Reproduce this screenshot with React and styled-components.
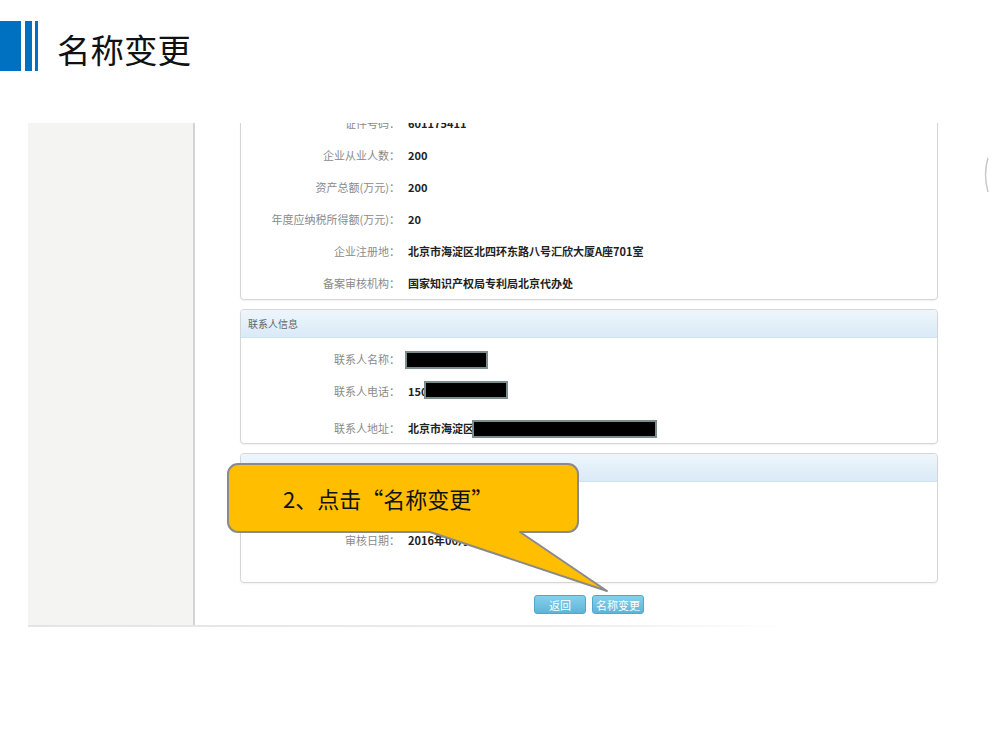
import styled, { createGlobalStyle } from "styled-components";

const GlobalStyle = createGlobalStyle`
  html, body {
    margin: 0;
    padding: 0;
    background: #ffffff;
  }
  body {
    font-family: "Noto Sans CJK SC", "Noto Sans", sans-serif;
  }
`;

const Page = styled.div`
  position: relative;
  width: 1000px;
  height: 750px;
  overflow: hidden;
  background: #ffffff;
`;

const Header = styled.div`
  display: flex;
  align-items: center;
  height: 50px;
  padding-top: 21px;
`;

const Bar = styled.div`
  width: ${(p) => p.$w}px;
  height: 50px;
  margin-right: ${(p) => p.$gap}px;
  background: #0070c0;
`;

const Title = styled.h1`
  margin: 5px 0 0 19px;
  font-size: 33.5px;
  font-weight: 400;
  line-height: 1;
  color: #111;
`;

const Shot = styled.div`
  display: flex;
  height: 502px;
  margin: 52px 0 0 28px;
  overflow: hidden;
`;

const Sidebar = styled.div`
  width: 165px;
  flex-shrink: 0;
  background: #f4f4f2;
  border-right: 2px solid #d4d4d4;
`;

const Main = styled.div`
  display: flex;
  flex-direction: column;
  gap: 9px;
  padding-left: 45px;
  width: 698px;
`;

const Panel = styled.div`
  border: 1px solid #d6d6d6;
  border-radius: 4px;
  background: #fff;
  box-shadow: 0 1px 2px rgba(0, 0, 0, 0.06);
  margin-top: ${(p) => p.$offset || 0}px;
  padding-bottom: ${(p) => p.$bottom || 0}px;
`;

const PanelHead = styled.div`
  height: 27px;
  display: flex;
  align-items: center;
  padding-left: 7px;
  font-size: 10px;
  color: #666;
  background: linear-gradient(#eef6fc, #d9eaf7);
  border-bottom: 1px solid #cfe2f1;
  border-radius: 4px 4px 0 0;
`;

const PanelBody = styled.div`
  padding-top: ${(p) => p.$top || 0}px;
`;

const Row = styled.div`
  display: flex;
  align-items: center;
  height: ${(p) => p.$h || 32}px;
  margin-top: ${(p) => p.$mt || 0}px;
`;

const Label = styled.div`
  width: 159px;
  text-align: right;
  font-size: 11px;
  color: #8a8a8a;
  white-space: nowrap;
`;

const Value = styled.div`
  display: flex;
  align-items: center;
  margin-left: 8px;
  font-size: 11px;
  font-weight: 700;
  color: #222;
  white-space: nowrap;
`;

const Redact = styled.span`
  display: inline-block;
  width: ${(p) => p.$w}px;
  height: 14px;
  margin-left: ${(p) => p.$ml || 0}px;
  margin-top: ${(p) => p.$mt || 0}px;
  background: #000;
  border: 2px solid #7d8c8c;
`;

const Actions = styled.div`
  display: flex;
  justify-content: center;
  gap: 6px;
  margin-top: 3px;
`;

const Btn = styled.div`
  width: 50px;
  height: 17px;
  display: flex;
  align-items: center;
  justify-content: center;
  font-size: 11px;
  color: #fff;
  background: linear-gradient(#86d0ea, #5db5d9);
  border: 1px solid #4fa7cd;
  border-radius: 3px;
`;

const ShotEdge = styled.div`
  height: 2px;
  margin-left: 28px;
  width: 760px;
  background: linear-gradient(to right, #e4e4e4, #ececec 70%, rgba(236, 236, 236, 0));
`;

const Callout = styled.svg`
  position: absolute;
  left: 226px;
  top: 462px;
`;

const CalloutText = styled.div`
  position: absolute;
  left: 228px;
  top: 464px;
  width: 350px;
  height: 68px;
  display: flex;
  align-items: center;
  padding-left: 55px;
  box-sizing: border-box;
  font-size: 22px;
  color: #111;
  white-space: nowrap;
`;

const EdgeMark = styled.svg`
  position: absolute;
  left: 980px;
  top: 156px;
`;

const companyRows = [
  ["证件号码：", "601175411"],
  ["企业从业人数：", "200"],
  ["资产总额(万元)：", "200"],
  ["年度应纳税所得额(万元)：", "20"],
  ["企业注册地：", "北京市海淀区北四环东路八号汇欣大厦A座701室"],
  ["备案审核机构：", "国家知识产权局专利局北京代办处"],
];

export default function App() {
  return (
    <Page>
      <GlobalStyle />
      <Header>
        <Bar $w={21} $gap={4} />
        <Bar $w={7} $gap={3} />
        <Bar $w={3} $gap={0} />
        <Title>名称变更</Title>
      </Header>

      <Shot>
        <Sidebar />
        <Main>
          <Panel $offset={-17}>
            {companyRows.map(([l, v]) => (
              <Row key={l}>
                <Label>{l}</Label>
                <Value>{v}</Value>
              </Row>
            ))}
          </Panel>

          <Panel>
            <PanelHead>联系人信息</PanelHead>
            <PanelBody $top={5}>
              <Row>
                <Label>联系人名称：</Label>
                <Value>
                  <Redact $w={79} $ml={-3} $mt={2} />
                </Value>
              </Row>
              <Row>
                <Label>联系人电话：</Label>
                <Value>
                  150
                  <Redact $w={80} $ml={-3} $mt={-2} />
                </Value>
              </Row>
              <Row $mt={6} $h={30}>
                <Label>联系人地址：</Label>
                <Value>
                  北京市海淀区
                  <Redact $w={181} $ml={-2} $mt={2} />
                </Value>
              </Row>
            </PanelBody>
          </Panel>

          <Panel $bottom={26}>
            <PanelHead />
            <PanelBody $top={6}>
              <Row />
              <Row $mt={4}>
                <Label>审核日期：</Label>
                <Value>2016年06月22日</Value>
              </Row>
            </PanelBody>
          </Panel>

          <Actions>
            <Btn>返回</Btn>
            <Btn>名称变更</Btn>
          </Actions>
        </Main>
      </Shot>
      <ShotEdge />

      <Callout width="390" height="134" viewBox="0 0 390 134">
        <path
          d="M12,2 H342 A10,10 0 0 1 352,12 V60 A10,10 0 0 1 342,70 H294 L381,129 L204,70 H12 A10,10 0 0 1 2,60 V12 A10,10 0 0 1 12,2 Z"
          fill="#ffbf00"
          stroke="#8a8a8a"
          strokeWidth="2"
          strokeLinejoin="round"
        />
      </Callout>
      <CalloutText>2、点击“名称变更”</CalloutText>

      <EdgeMark width="14" height="40" viewBox="0 0 14 40">
        <path d="M8,2 Q3,18 8,36" fill="none" stroke="#c8c8c8" strokeWidth="1.5" />
      </EdgeMark>
    </Page>
  );
}
